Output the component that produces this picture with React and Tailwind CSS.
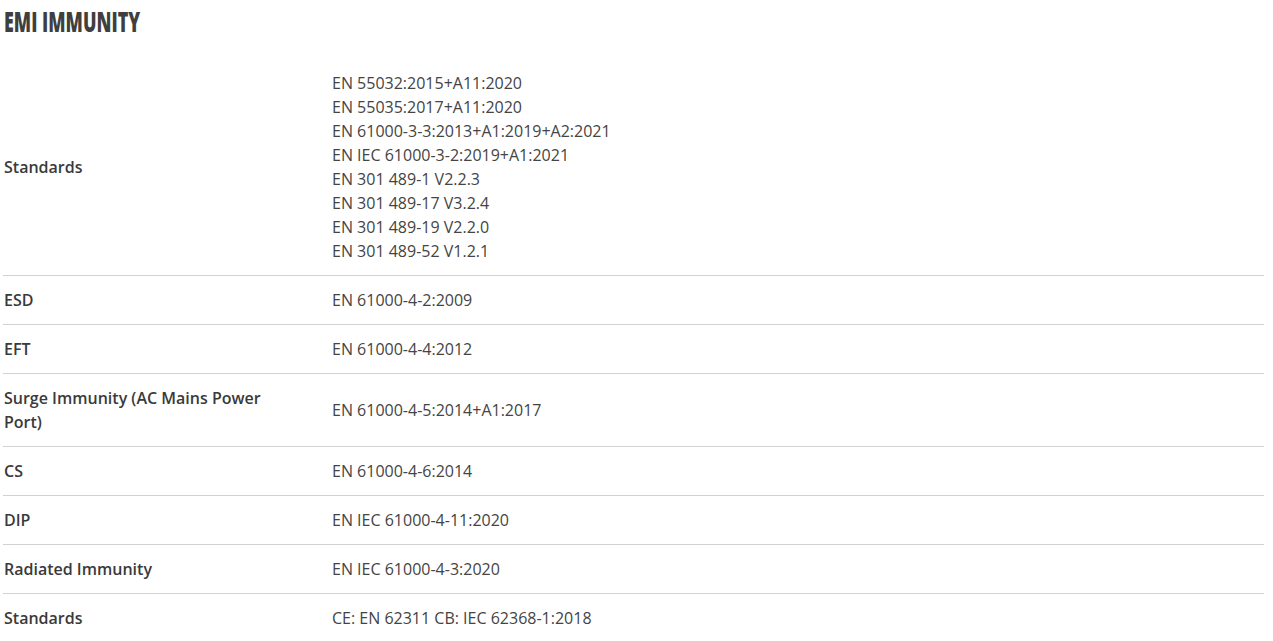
export default function App() {
  const rows = [
    {
      label: "Standards",
      values: [
        "EN 55032:2015+A11:2020",
        "EN 55035:2017+A11:2020",
        "EN 61000-3-3:2013+A1:2019+A2:2021",
        "EN IEC 61000-3-2:2019+A1:2021",
        "EN 301 489-1 V2.2.3",
        "EN 301 489-17 V3.2.4",
        "EN 301 489-19 V2.2.0",
        "EN 301 489-52 V1.2.1",
      ],
    },
    { label: "ESD", values: ["EN 61000-4-2:2009"] },
    { label: "EFT", values: ["EN 61000-4-4:2012"] },
    { label: "Surge Immunity (AC Mains Power Port)", values: ["EN 61000-4-5:2014+A1:2017"] },
    { label: "CS", values: ["EN 61000-4-6:2014"] },
    { label: "DIP", values: ["EN IEC 61000-4-11:2020"] },
    { label: "Radiated Immunity", values: ["EN IEC 61000-4-3:2020"] },
    { label: "Standards", values: ["CE: EN 62311 CB: IEC 62368-1:2018"] },
  ];
  return (
    <div className="bg-white w-[1273px] h-[641px] overflow-hidden pl-[3px] pr-[9px]" style={{ fontFamily: '"Open Sans", sans-serif' }}>
      <h2 className="pt-[5px] pl-[1px] h-[59px] text-[28px] font-extrabold text-[#3f3f3f] leading-[32px]">
        <span className="inline-block origin-left scale-x-[0.64]">EMI IMMUNITY</span>
      </h2>
      <div className="flex flex-col">
        {rows.map((r, i) => (
          <div
            key={i}
            className={`flex items-center ${i < rows.length - 1 ? "border-b border-[#d2d2d2]" : ""}`}
          >
            <div className="w-[329px] shrink-0 pl-[1px] pr-[40px] py-3 text-[16px] leading-[24px] font-semibold text-[#3a3a3a]">
              {r.label}
            </div>
            <div className="flex-1 py-3 text-[16px] leading-[24px] text-[#444444]">
              {r.values.map((v, j) => (
                <div key={j}>{v}</div>
              ))}
            </div>
          </div>
        ))}
      </div>
    </div>
  );
}
